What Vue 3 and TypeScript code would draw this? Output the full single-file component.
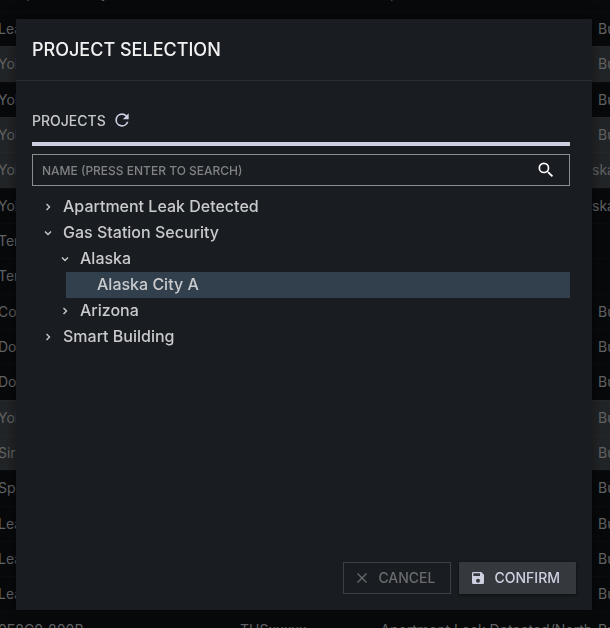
<script setup lang="ts">
import { computed, ref } from 'vue'

interface DeviceRow {
  name: string
  model?: string
  site?: string
  unit?: string
  selected?: boolean
}

interface TreeNode {
  id: string
  label: string
  children: TreeNode[]
  leaf?: boolean
}

interface VisibleNode {
  node: TreeNode
  depth: number
}

const site = 'Apartment Leak Detected/North'
const alaska = 'Gas Station Security/Ala'

const rows: DeviceRow[] = [
  { name: 'Temp & humidity', site, unit: 'Building' },
  { name: 'Leak sensor', site, unit: 'Building' },
  { name: 'Yokogawa', site, unit: 'Building', selected: true },
  { name: 'Yokogawa', site, unit: 'Building' },
  { name: 'Yokogawa', site, unit: 'Building', selected: true },
  { name: 'Yokogawa', site: alaska, unit: 'ska', selected: true },
  { name: 'Yokogawa', site: alaska, unit: 'ska' },
  { name: 'Temperature' },
  { name: 'Temperature' },
  { name: 'Corridor', site, unit: 'Building' },
  { name: 'Door', site, unit: 'Building' },
  { name: 'Door', site, unit: 'Building' },
  { name: 'Yokogawa', site, unit: 'Building', selected: true },
  { name: 'Siren', site, unit: 'Building', selected: true },
  { name: 'Speaker', site, unit: 'Building' },
  { name: 'Leak sensor', site, unit: 'Building' },
  { name: 'Leak sensor', site, unit: 'Building' },
  { name: 'Leak sensor', site, unit: 'Building' },
  { name: '0E8C0_800B', model: 'THSxxxxx', site, unit: 'Building' },
]

const tree: TreeNode[] = [
  { id: 'apartment', label: 'Apartment Leak Detected', children: [] },
  {
    id: 'gas',
    label: 'Gas Station Security',
    children: [
      {
        id: 'alaska',
        label: 'Alaska',
        children: [{ id: 'city-a', label: 'Alaska City A', children: [], leaf: true }],
      },
      { id: 'arizona', label: 'Arizona', children: [] },
    ],
  },
  { id: 'smart', label: 'Smart Building', children: [] },
]

const open = ref<string[]>(['gas', 'alaska'])
const selected = ref('city-a')
const query = ref('')

const visibleNodes = computed<VisibleNode[]>(() => {
  const list: VisibleNode[] = []
  const walk = (nodes: TreeNode[], depth: number): void => {
    for (const node of nodes) {
      list.push({ node, depth })
      if (open.value.includes(node.id)) walk(node.children, depth + 1)
    }
  }
  walk(tree, 0)
  return list
})

function toggle(id: string): void {
  open.value = open.value.includes(id)
    ? open.value.filter((item) => item !== id)
    : [...open.value, id]
}
</script>

<template>
  <main class="page">
    <table class="devices" aria-label="Devices">
      <tbody>
        <tr v-for="(row, index) in rows" :key="index" :class="{ marked: row.selected }">
          <td class="name">{{ row.name }}</td>
          <td class="model">{{ row.model }}</td>
          <td class="site">{{ row.site }}</td>
          <td :class="['unit', { spaced: row.unit === 'Building' }]">{{ row.unit }}</td>
        </tr>
      </tbody>
    </table>

    <section class="dialog" role="dialog" aria-modal="true" aria-labelledby="dialog-title">
      <header class="dialog-header">
        <h1 id="dialog-title">PROJECT SELECTION</h1>
      </header>

      <div class="dialog-body">
        <div class="projects-head">
          <h2>PROJECTS</h2>
          <button type="button" class="icon-button" aria-label="Refresh">
            <svg width="20" height="20" viewBox="0 0 24 24" fill="currentColor">
              <path d="M17.65 6.35A7.96 7.96 0 0 0 12 4a8 8 0 1 0 7.73 10h-2.08A6 6 0 1 1 12 6c1.66 0 3.14.69 4.22 1.78L13 11h7V4z" />
            </svg>
          </button>
        </div>

        <form class="search" @submit.prevent>
          <input v-model="query" type="text" aria-label="Project name" placeholder="NAME (PRESS ENTER TO SEARCH)" />
          <button type="submit" class="icon-button search-button" aria-label="Search">
            <svg width="20" height="20" viewBox="0 0 24 24" fill="currentColor">
              <path d="M15.5 14h-.79l-.28-.27A6.47 6.47 0 0 0 16 9.5 6.5 6.5 0 1 0 9.5 16c1.61 0 3.09-.59 4.23-1.57l.27.28v.79l5 4.99L20.49 19zm-6 0a4.5 4.5 0 1 1 0-9 4.5 4.5 0 0 1 0 9z" />
            </svg>
          </button>
        </form>

        <ul class="tree" role="tree" aria-label="Projects">
          <li
            v-for="{ node, depth } in visibleNodes"
            :key="node.id"
            role="treeitem"
            :aria-level="depth + 1"
            :aria-selected="selected === node.id"
            :class="['node', `depth-${depth}`, { selected: selected === node.id }]"
          >
            <button
              v-if="!node.leaf"
              type="button"
              :class="['chevron', { expanded: open.includes(node.id) }]"
              :aria-label="`Toggle ${node.label}`"
              @click="toggle(node.id)"
            >
              <svg width="12" height="12" viewBox="0 0 12 12" fill="none" stroke="currentColor" stroke-width="1.4">
                <path d="M4.500 3 7.500 6 4.500 9" />
              </svg>
            </button>
            <button type="button" class="label" @click="selected = node.id">{{ node.label }}</button>
          </li>
        </ul>
      </div>

      <footer class="dialog-footer">
        <button type="button" class="action cancel">
          <svg width="16" height="16" viewBox="0 0 16 16" fill="none" stroke="currentColor" stroke-width="1.300">
            <path d="M3.500 3.500 12.500 12.500M12.500 3.500 3.500 12.500" />
          </svg>
          <span>CANCEL</span>
        </button>
        <button type="button" class="action confirm">
          <svg width="16" height="16" viewBox="0 0 24 24" fill="currentColor">
            <path d="M17 3H5a2 2 0 0 0-2 2v14a2 2 0 0 0 2 2h14a2 2 0 0 0 2-2V7zm-5 16a3 3 0 1 1 0-6 3 3 0 0 1 0 6zm3-10H5V5h10z" />
          </svg>
          <span>CONFIRM</span>
        </button>
      </footer>
    </section>
  </main>
</template>

<style>
body {
  margin: 0;
  background: #08090b;
}
</style>

<style scoped>
.page {
  height: 100vh;
  overflow: hidden;
  font-family: Inter, "Liberation Sans", sans-serif;
}

button,
input {
  font-family: inherit;
}

svg {
  display: block;
}

.devices {
  width: 100%;
  margin-top: -24px;
  border-collapse: collapse;
  table-layout: fixed;
  font-size: 14px;
  color: #626365;
}

.devices tr {
  height: 35px;
}

.devices tr:nth-child(3n) {
  height: 36px;
}

.devices tr.marked {
  background: #222527;
}

.devices td {
  box-sizing: border-box;
  padding: 0;
  border-bottom: 1px solid rgba(255, 255, 255, 0.02);
  line-height: 20px;
  white-space: nowrap;
}

.devices .name {
  width: 240px;
  text-indent: -2px;
}

.devices .model {
  width: 120px;
}

.devices .site {
  text-align: right;
}

.devices .unit {
  width: 18px;
}

.devices .unit.spaced {
  padding-left: 6px;
}

.dialog {
  position: fixed;
  inset: 19px 18px 18px 16px;
  display: flex;
  flex-direction: column;
  background: #191c20;
  box-shadow: 0 0 12px rgba(0, 0, 0, 0.5);
}

.dialog-header {
  padding: 20px 16px;
  border-bottom: 1px solid #2c2f31;
}

h1,
h2 {
  margin: 0;
  font-weight: 500;
}

h1 {
  font-size: 18px;
  line-height: 21px;
  color: #f2f2f2;
}

.dialog-body {
  flex: 1;
  padding: 29px 22px 0 16px;
}

.projects-head {
  display: flex;
  align-items: center;
  gap: 6px;
  height: 20px;
  padding-bottom: 12px;
  border-bottom: 4px solid #cfcfe2;
}

h2 {
  font-size: 14px;
  color: #c6c7c9;
}

.icon-button {
  padding: 0;
  border: 0;
  background: none;
  color: #cfcfe2;
}

.search {
  display: flex;
  align-items: center;
  height: 30px;
  margin: 8px 0;
  padding: 0 13px 0 9px;
  border: 1px solid #8b8e90;
}

.search input {
  flex: 1;
  min-width: 0;
  padding: 0;
  border: 0;
  outline: 0;
  background: none;
  font-size: 12px;
  font-weight: 500;
  color: #d0d1d3;
}

.search input::placeholder {
  color: #808284;
  opacity: 1;
}

.search-button {
  color: #ffffff;
}

.tree {
  margin: 0;
  padding: 0;
  list-style: none;
}

.node {
  display: flex;
  align-items: center;
  gap: 9px;
  height: 26px;
  padding-left: 10px;
  color: #c9cacc;
}

.node.depth-1 {
  padding-left: 27px;
}

.node.depth-2 {
  margin-left: 34px;
  padding-left: 31px;
}

.node.selected {
  background: #32404d;
}

.chevron,
.label {
  padding: 0;
  border: 0;
  background: none;
  color: inherit;
}

.chevron.expanded svg {
  transform: rotate(90deg);
}

.label {
  padding-bottom: 2px;
  font-size: 16px;
  font-weight: 500;
  line-height: 24px;
}

.dialog-footer {
  display: flex;
  justify-content: flex-end;
  gap: 8px;
  padding: 16px;
}

.action {
  display: flex;
  align-items: center;
  gap: 8px;
  height: 32px;
  padding: 0 15px 0 10px;
  border: 1px solid #3c3f43;
  font-size: 14px;
  font-weight: 500;
}

.action span {
  padding-bottom: 2px;
}

.cancel {
  background: none;
  color: #696b6e;
}

.confirm {
  border-color: #35383d;
  background: #35383d;
  color: #cfcfe2;
  box-shadow: 0 1px 3px rgba(0, 0, 0, 0.5);
}
</style>
